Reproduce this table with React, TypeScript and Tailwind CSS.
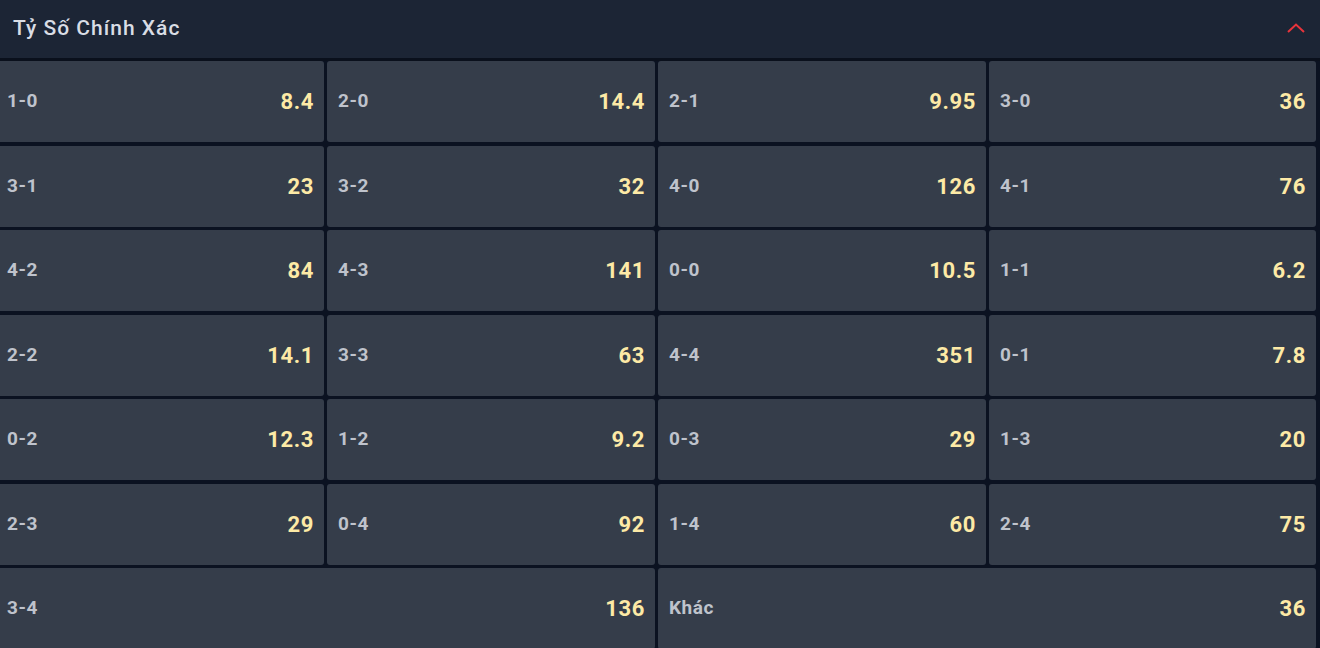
import React from 'react';

const scores: { label: string; odds: string; wide?: boolean }[] = [
  { label: '1-0', odds: '8.4' },
  { label: '2-0', odds: '14.4' },
  { label: '2-1', odds: '9.95' },
  { label: '3-0', odds: '36' },
  { label: '3-1', odds: '23' },
  { label: '3-2', odds: '32' },
  { label: '4-0', odds: '126' },
  { label: '4-1', odds: '76' },
  { label: '4-2', odds: '84' },
  { label: '4-3', odds: '141' },
  { label: '0-0', odds: '10.5' },
  { label: '1-1', odds: '6.2' },
  { label: '2-2', odds: '14.1' },
  { label: '3-3', odds: '63' },
  { label: '4-4', odds: '351' },
  { label: '0-1', odds: '7.8' },
  { label: '0-2', odds: '12.3' },
  { label: '1-2', odds: '9.2' },
  { label: '0-3', odds: '29' },
  { label: '1-3', odds: '20' },
  { label: '2-3', odds: '29' },
  { label: '0-4', odds: '92' },
  { label: '1-4', odds: '60' },
  { label: '2-4', odds: '75' },
  { label: '3-4', odds: '136', wide: true },
  { label: 'Khác', odds: '36', wide: true },
];

function OddsCell({ label, odds, wide }: { label: string; odds: string; wide?: boolean }) {
  return (
    <div
      className={`flex items-center justify-between rounded-[3px] bg-[#353d4a] pl-[11px] pr-[10px] ${
        wide ? 'col-span-2' : ''
      }`}
    >
      <span className="text-[19px] font-bold text-[#bfc3cc] tracking-[0.5px]">{label}</span>
      <span className="text-[22px] font-bold text-[#fdeaa6] tracking-[0.6px]">{odds}</span>
    </div>
  );
}

export default function App() {
  return (
    <div className="h-[648px] w-full overflow-hidden bg-[#0b1221] font-['Roboto',sans-serif]">
      {/* Header */}
      <div className="flex h-[61px] items-center justify-between border-b-[3px] border-[#0a101c] bg-[#1c2535] pl-[13px] pr-[15px]">
        <h2 className="text-[21px] font-medium tracking-[1px] text-[#d9dde5]">Tỷ Số Chính Xác</h2>
        <svg width="18" height="10" viewBox="0 0 18 10" fill="none" className="mb-[2px]">
          <path d="M1 9L9 1.5L17 9" stroke="#e8343b" strokeWidth="2" />
        </svg>
      </div>

      {/* Score grid, first column runs a little past the left edge */}
      <div className="-ml-[4px] grid grid-cols-[328px_328px_328px_327px] auto-rows-[81px] gap-x-[3px] gap-y-[3.5px]">
        {scores.map((s) => (
          <OddsCell key={s.label} label={s.label} odds={s.odds} wide={s.wide} />
        ))}
      </div>
    </div>
  );
}
